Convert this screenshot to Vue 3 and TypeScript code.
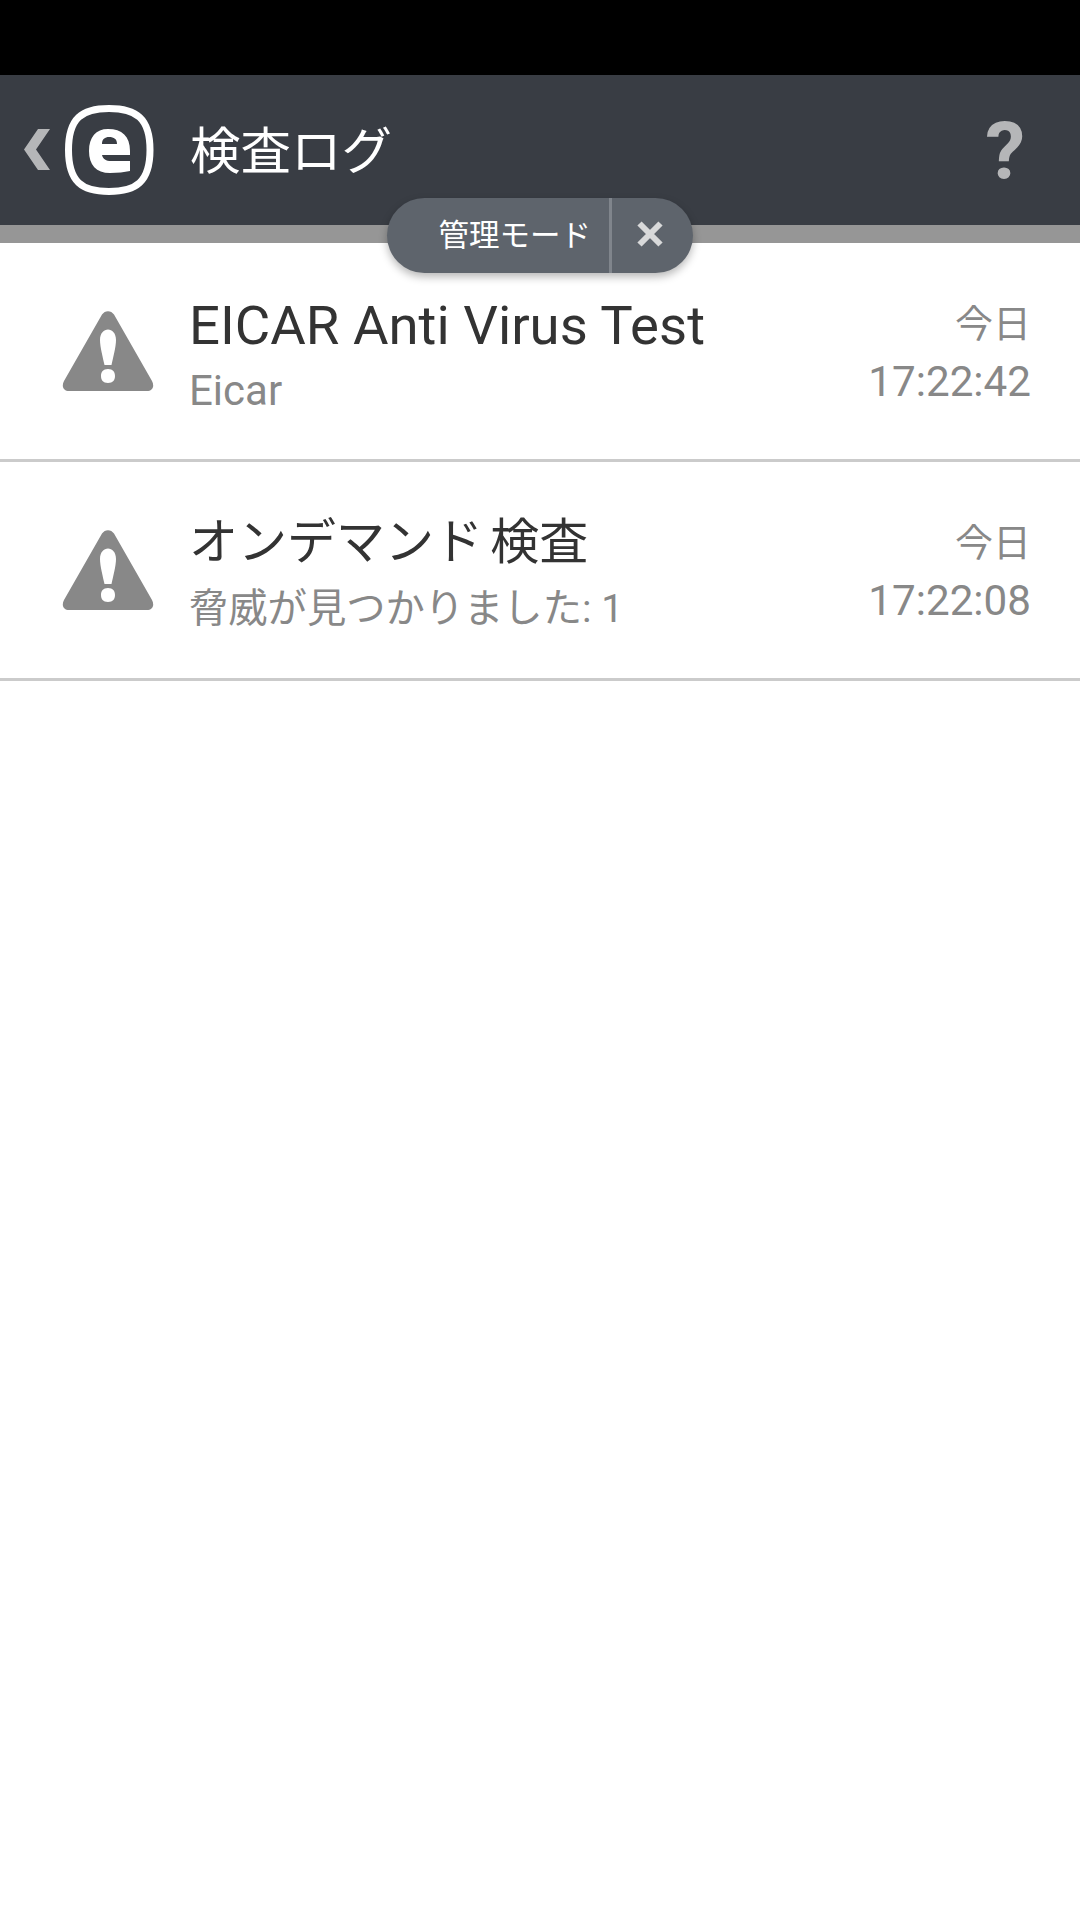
<template>
  <div class="screen">
    <div class="status-bar"></div>
    <header class="app-bar">
      <svg class="back" width="28" height="42" viewBox="0 0 28 42">
        <path d="M15 0H27L13 20.5L27 41H15L1 20.5Z" fill="#b5b6b8" />
      </svg>
      <svg class="logo" width="92" height="92" viewBox="0 0 92 92">
        <path d="M45 3.500C72 3.500 86 13 86 45C86 77 72 86.500 45 86.500C18 86.500 4.500 77 4.500 45C4.500 13 18 3.500 45 3.500Z" fill="none" stroke="#fff" stroke-width="7" />
        <path fill-rule="evenodd" fill="#fff" d="M44 24C58 24 66 31 66 46V50H38C39 54 42 56 47 56H66V66C60 67 54 68 46 68C32 68 25 60 25 46C25 32 32 24 44 24ZM38 39H53C53 34 50 32 45 32C41 32 38 34 38 39Z" />
      </svg>
      <h1 class="title">検査ログ</h1>
      <span class="help">?</span>
    </header>
    <div class="strip"></div>

    <div class="mode-pill">
      <span class="mode-label">管理モード</span>
      <span class="mode-close">
        <svg width="26" height="26" viewBox="0 0 26 26">
          <path d="M2.500 2.500L23.500 23.500M23.500 2.500L2.500 23.500" stroke="#d8d9da" stroke-width="6" />
        </svg>
      </span>
    </div>

    <ul class="log-list">
      <li v-for="item in logs" :key="item.time" class="log-row">
        <svg class="warn" width="92" height="82" viewBox="0 0 92 82">
          <path fill="#888" fill-rule="evenodd" d="M40 3.500C43 -1 49 -1 52 3.500L90 70C93 76 90 80 85 80H7C2 80 -1 76 2 70ZM38 29C38 36 41 47 42.500 54H49.500C51 47 54 36 54 29C54 15 38 15 38 29ZM46 58C41 58 39 61 39 65C39 69 41 72 46 72C51 72 53 69 53 65C53 61 51 58 46 58Z" />
        </svg>
        <div class="log-main">
          <div class="log-title" :class="{ 'log-title-ja': item.ja }">{{ item.title }}</div>
          <div class="log-sub" :class="{ 'log-sub-ja': item.ja }">{{ item.sub }}</div>
        </div>
        <div class="log-when">
          <div class="log-day">今日</div>
          <div class="log-time">{{ item.time }}</div>
        </div>
      </li>
    </ul>
  </div>
</template>

<script setup lang="ts">
const logs = [
  { title: "EICAR Anti Virus Test", sub: "Eicar", time: "17:22:42", ja: false },
  { title: "オンデマンド 検査", sub: "脅威が見つかりました: 1", time: "17:22:08", ja: true },
];
</script>

<style>
html,
body {
  margin: 0;
  background: #fff;
}
</style>

<style scoped>
.screen {
  position: relative;
  width: 1080px;
  height: 1920px;
  background: #fff;
  font-family: Roboto, "Noto Sans CJK JP", sans-serif;
  overflow: hidden;
}
.status-bar {
  height: 75px;
  background: #000;
}
.app-bar {
  display: flex;
  align-items: center;
  height: 150px;
  background: #393d44;
  padding-left: 23px;
  box-sizing: border-box;
}
.logo {
  margin: 2px 0 0 13px;
}
.title {
  margin: 4px 0 0 34px;
  font-size: 50.500px;
  font-weight: 400;
  color: #fff;
  line-height: 1;
}
.help {
  margin-left: auto;
  margin-right: 55px;
  margin-top: 3px;
  font-size: 80px;
  font-weight: 700;
  color: #b5b6b8;
  line-height: 1;
}
.strip {
  height: 18px;
  background: #969696;
}
.mode-pill {
  position: absolute;
  left: 387px;
  top: 198px;
  width: 306px;
  height: 75px;
  display: flex;
  border-radius: 38px;
  background: #5e646c;
  box-shadow: 0 4px 8px rgba(0, 0, 0, 0.28);
}
.mode-label {
  width: 222px;
  padding-right: 18px;
  box-sizing: border-box;
  text-align: right;
  font-size: 30.500px;
  line-height: 75px;
  color: #fff;
}
.mode-close {
  flex: 1;
  display: flex;
  align-items: center;
  justify-content: center;
  border-left: 3px solid #80858c;
  padding: 0 5px 3px 0;
}
.log-list {
  list-style: none;
  margin: 0;
  padding: 0;
}
.log-row {
  display: flex;
  align-items: center;
  height: 219px;
  box-sizing: border-box;
  border-bottom: 3px solid #cbcbcb;
  padding: 2px 49px 0 62px;
}
.warn {
  flex: none;
}
.log-main {
  flex: 1;
  margin: 3px 0 0 35px;
}
.log-title {
  padding-top: 3px;
  font-size: 54.500px;
  line-height: 60px;
  color: #333;
}
.log-title-ja {
  padding-top: 0;
  font-size: 49px;
  word-spacing: -5px;
}
.log-sub {
  margin-top: 12px;
  font-size: 42px;
  line-height: 48px;
  color: #888;
}
.log-sub-ja {
  font-size: 39.300px;
}
.log-when {
  padding-top: 2px;
  text-align: right;
  color: #888;
  font-size: 42.200px;
}
.log-day {
  font-size: 38px;
  line-height: 48px;
}
.log-time {
  margin-top: 10px;
  line-height: 48px;
}
</style>
